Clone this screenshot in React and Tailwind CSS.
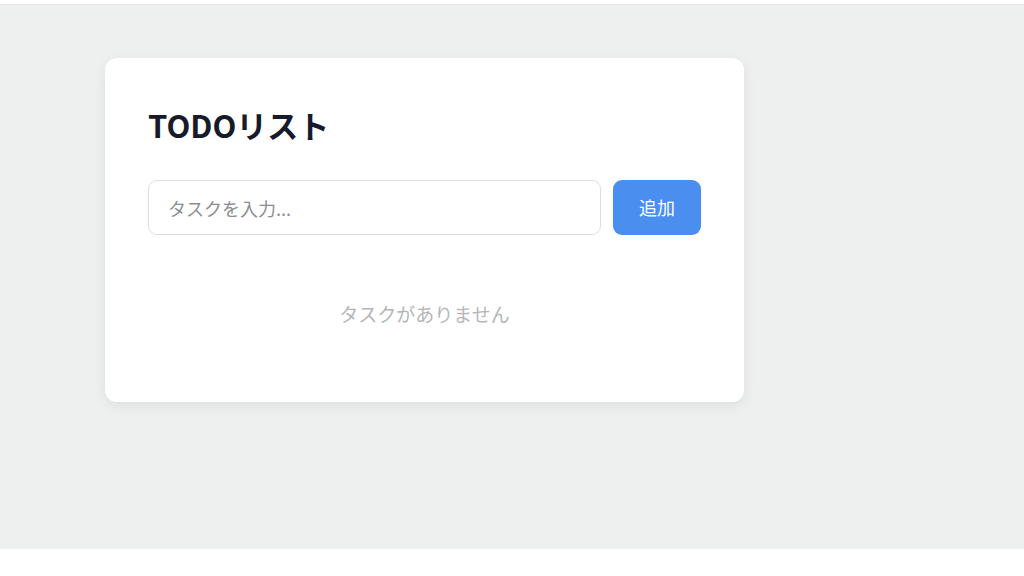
export default function App() {
  return (
    <div className="w-[1024px] h-[576px] bg-white font-['Noto_Sans_CJK_JP','Noto_Sans',sans-serif]">
      <div className="h-[5px] border-b border-[#e4e6e6] bg-white" />
      <main className="h-[544px] bg-[#eef0f0] pt-[53px] pl-[105px]">
        <div className="w-[639px] h-[344px] rounded-[12px] bg-white px-[43px] pt-[47px] shadow-[0_4px_14px_rgba(0,0,0,0.07)]">
          <h1 className="text-[31px] leading-[40px] font-bold text-[#161a2b]">TODOリスト</h1>
          <div className="mt-[35px] flex gap-[12px]">
            <input
              placeholder="タスクを入力..."
              className="h-[55px] w-[454px] rounded-[9px] border border-[#dcdfe2] px-[19px] text-[18px] outline-none placeholder:text-[#8a8d91]"
            />
            <button className="h-[55px] w-[88px] rounded-[9px] bg-[#4a8ef0] text-[18px] text-white">追加</button>
          </div>
          <p className="mt-[66px] text-center text-[19px] leading-[26px] text-[#b4b6b8]">タスクがありません</p>
        </div>
      </main>
    </div>
  );
}
